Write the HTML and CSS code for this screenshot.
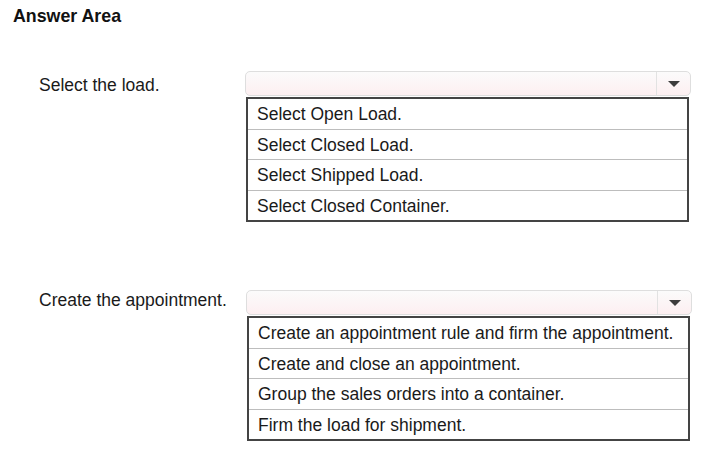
FILE: index.html
```html
<!DOCTYPE html>
<html lang="en">
<head>
    <meta charset="UTF-8">
    <title>Answer Area</title>
    <link rel="stylesheet" href="styles.css">
</head>
<body>
    <h1 class="title">Answer Area</h1>

    <div class="question">
        <div class="label">Select the load.</div>
        <div class="answer">
            <div class="select">
                <span class="select-value"></span>
                <span class="select-arrow"></span>
            </div>
            <ul class="options">
                <li>Select Open Load.</li>
                <li>Select Closed Load.</li>
                <li>Select Shipped Load.</li>
                <li>Select Closed Container.</li>
            </ul>
        </div>
    </div>

    <div class="question second">
        <div class="label">Create the appointment.</div>
        <div class="answer">
            <div class="select">
                <span class="select-value"></span>
                <span class="select-arrow"></span>
            </div>
            <ul class="options">
                <li>Create an appointment rule and firm the appointment.</li>
                <li>Create and close an appointment.</li>
                <li>Group the sales orders into a container.</li>
                <li>Firm the load for shipment.</li>
            </ul>
        </div>
    </div>
</body>
</html>
```

FILE: styles.css
```css
body {
    margin: 0;
    background: #fff;
    color: #1a1a1a;
    font-family: "Liberation Sans", Arial, sans-serif;
}
.title {
    margin: 0;
    padding: 5px 0 0 13px;
    font-size: 17.8px;
    line-height: 22px;
    font-weight: bold;
    color: #111;
}
.question {
    display: flex;
    align-items: flex-start;
    margin-top: 44px;
    padding-left: 39px;
}
.question.second {
    margin-top: 68px;
}
.label {
    width: 206px;
    font-size: 17.5px;
    line-height: 25px;
    padding-top: 2px;
}
.second .label {
    width: 207px;
    padding-top: 0;
    margin-top: -2px;
}
.answer {
    width: 446px;
}
.select {
    display: flex;
    height: 23px;
    border: 1px solid #dedede;
    border-radius: 5px;
    background: linear-gradient(#fbfbfb, #fdeff1);
}
.select-value {
    flex: 1;
}
.select-arrow {
    width: 33px;
    border-left: 1px solid #e2e2e2;
    display: flex;
    align-items: center;
    justify-content: center;
}
.select-arrow::before {
    content: "";
    border-left: 6.5px solid transparent;
    border-right: 6.5px solid transparent;
    border-top: 6px solid #3d3d3d;
    margin-top: 1px;
}
.options {
    list-style: none;
    margin: 1px 2px 0 1px;
    padding: 0;
    border: 2px solid #444;
    font-size: 17.5px;
}
.options li {
    height: 28.5px;
    padding-top: 1px;
    line-height: 29.5px;
    padding-left: 9px;
    border-top: 1px solid #bdbdbd;
    white-space: nowrap;
}
.options li:first-child {
    border-top: none;
}
```
